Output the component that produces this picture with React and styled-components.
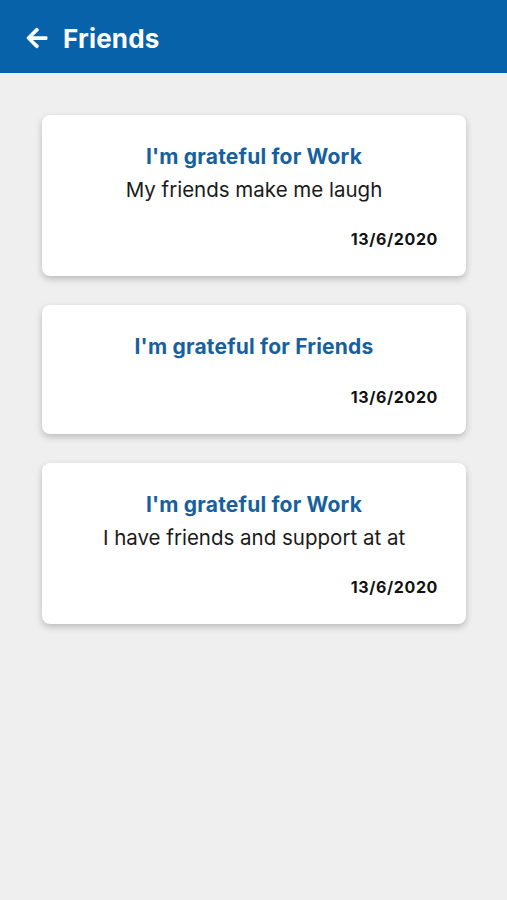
import React from 'react';
import styled, { createGlobalStyle } from 'styled-components';
import { FaArrowLeft } from 'react-icons/fa';

const GlobalStyle = createGlobalStyle`
	html, body {
		margin: 0;
		padding: 0;
		background: #efefef;
		font-family: Inter, "Noto Sans", sans-serif;
	}
`;

const Root = styled.div`
	min-height: 900px;
	background: #efefef;
`;
const Header = styled.header`
	height: 73px;
	background: #0762aa;
	display: flex;
	align-items: center;
	padding: 3px 25px 0;
	box-sizing: border-box;
	gap: 14px;
	color: #fff;
`;
const BackButton = styled.button`
	border: 0;
	background: none;
	color: #fff;
	padding: 0;
	display: flex;
	align-items: center;
	cursor: pointer;
`;
const Title = styled.h1`
	margin: 0;
	font-size: 26px;
	font-weight: 700;
	letter-spacing: 0.2px;
`;
const List = styled.div`
	display: flex;
	flex-direction: column;
	gap: 29px;
	padding: 42px 41px 0 42px;
`;
const Card = styled.div`
	background: #fff;
	border-radius: 8px;
	box-shadow: 0 3px 7px rgba(0, 0, 0, 0.22);
	padding: 29px 28px 27px;
	display: flex;
	flex-direction: column;
	align-items: center;
`;
const Heading = styled.div`
	color: #17609f;
	font-size: 21px;
	font-weight: 700;
	line-height: 26px;
	letter-spacing: 0.2px;
`;
const Body = styled.div`
	color: #1a1a1a;
	font-size: 20.5px;
	line-height: 32px;
	padding-top: 4px;
	margin-bottom: -4px;
`;
const Date = styled.div`
	align-self: flex-end;
	margin-top: 27px;
	font-size: 16px;
	font-weight: 700;
	line-height: 20px;
	letter-spacing: 0.6px;
	color: #111;
`;

const entries = [
	{ id: 1, topic: 'Work', text: 'My friends make me laugh', date: '13/6/2020' },
	{ id: 2, topic: 'Friends', text: '', date: '13/6/2020' },
	{ id: 3, topic: 'Work', text: 'I have friends and support at at', date: '13/6/2020' },
];

export default function App() {
	return (
		<Root>
			<GlobalStyle />
			<Header>
				<BackButton aria-label="Back">
					<FaArrowLeft size={24} />
				</BackButton>
				<Title>Friends</Title>
			</Header>
			<List>
				{entries.map(({ id, topic, text, date }) => (
					<Card key={id}>
						<Heading>I'm grateful for {topic}</Heading>
						{text && <Body>{text}</Body>}
						<Date>{date}</Date>
					</Card>
				))}
			</List>
		</Root>
	);
}
